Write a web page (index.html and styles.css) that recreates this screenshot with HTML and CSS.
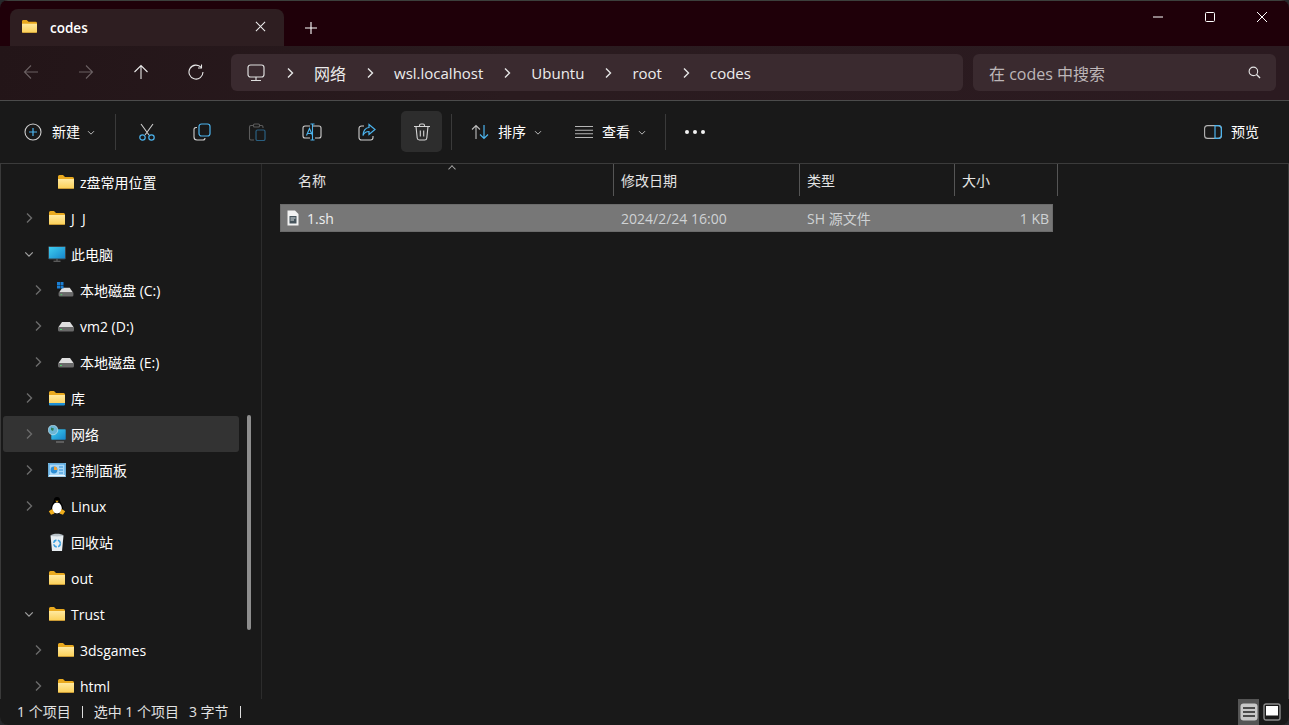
FILE: index.html
```html
<!DOCTYPE html>
<html lang="zh-CN">
<head>
<meta charset="utf-8">
<title>codes</title>
<link rel="stylesheet" href="styles.css">
</head>
<body>
<svg class="defs" width="0" height="0" aria-hidden="true">
  <defs>
    <linearGradient id="gf" x1="0" y1="0" x2="0" y2="1"><stop offset="0" stop-color="#ffe9a0"/><stop offset="1" stop-color="#fbcf55"/></linearGradient>
    <linearGradient id="gm" x1="0" y1="0" x2="1" y2="1"><stop offset="0" stop-color="#3fd0f2"/><stop offset="1" stop-color="#1583c9"/></linearGradient>
    <symbol id="folder" viewBox="0 0 18 16">
      <path d="M1 2.500A1.500 1.500 0 0 1 2.500 1H6l2 2h7.500A1.500 1.500 0 0 1 17 4.500V6H1z" fill="#e9a91e"/>
      <path d="M1 5h16v8.500a1.500 1.500 0 0 1-1.500 1.500h-13A1.500 1.500 0 0 1 1 13.500z" fill="url(#gf)"/>
      <path d="M1 14h16a1.500 1.500 0 0 1-1.500 1h-13A1.500 1.500 0 0 1 1 14z" fill="#c99a35"/>
    </symbol>
    <symbol id="drive" viewBox="0 0 18 14">
      <path d="M5 3h8l3.500 5h-15z" fill="#dedede"/>
      <path d="M1 8h16v3a1.500 1.500 0 0 1-1.500 1.500h-13A1.500 1.500 0 0 1 1 11z" fill="#6a6a6a"/>
      <rect x="3" y="10" width="2" height="1" fill="#4fd06a"/>
    </symbol>
    <symbol id="chev-r" viewBox="0 0 10 12"><path d="M3 1.500 7.500 6 3 10.500" fill="none" stroke="currentColor" stroke-width="1.400"/></symbol>
    <symbol id="chev-d" viewBox="0 0 12 10"><path d="M1.500 3 6 7.500 10.500 3" fill="none" stroke="currentColor" stroke-width="1.500"/></symbol>
  </defs>
</svg>

<div class="app">
  <header class="titlebar">
    <div class="tab">
      <svg class="tab-folder"><use href="#folder"/></svg>
      <span class="tab-name">codes</span>
      <svg class="tab-close" viewBox="0 0 12 12"><path d="M1 1l10 10M11 1 1 11" stroke="#eee" stroke-width="1.100"/></svg>
    </div>
    <svg class="tab-add" viewBox="0 0 12 12"><path d="M6 0v12M0 6h12" stroke="#fff" stroke-width="1.100"/></svg>
    <div class="win-btns">
      <svg class="win-ico" viewBox="0 0 12 12"><path d="M1 6h10" stroke="#fff" stroke-width="1"/></svg>
      <svg class="win-ico" viewBox="0 0 12 12"><rect x="1.500" y="1.500" width="9" height="9" rx="1" fill="none" stroke="#fff" stroke-width="1"/></svg>
      <svg class="win-ico" viewBox="0 0 12 12"><path d="M1 1l10 10M11 1 1 11" stroke="#fff" stroke-width="1"/></svg>
    </div>
  </header>

  <nav class="addressbar">
    <div class="nav-btns">
      <svg class="nav-ico dim" viewBox="0 0 16 16"><path d="M15 8H1.500M8 1.500 1.500 8 8 14.500" fill="none" stroke="currentColor" stroke-width="1.100"/></svg>
      <svg class="nav-ico dim" viewBox="0 0 16 16"><path d="M1 8h13.500M8 1.500 14.500 8 8 14.500" fill="none" stroke="currentColor" stroke-width="1.100"/></svg>
      <svg class="nav-ico" viewBox="0 0 16 16"><path d="M8 15V1.500M1.500 8 8 1.500 14.500 8" fill="none" stroke="currentColor" stroke-width="1.100"/></svg>
      <svg class="nav-ico" viewBox="0 0 16 16"><path d="M13.200 3.400A7 7 0 1 0 15 8" fill="none" stroke="currentColor" stroke-width="1.100"/><path d="M13.500 0.500v3.500H10" fill="none" stroke="currentColor" stroke-width="1.100"/></svg>
    </div>
    <div class="crumbs">
      <svg class="pc-ico" viewBox="0 0 18 18"><rect x="1" y="1" width="16" height="12" rx="2.500" fill="none" stroke="#ddd" stroke-width="1.200"/><path d="M9 13v3M4 16.500h10" stroke="#ddd" stroke-width="1.200"/></svg>
      <svg class="crumb-sep"><use href="#chev-r"/></svg><span class="crumb crumb-cjk">网络</span>
      <svg class="crumb-sep"><use href="#chev-r"/></svg><span class="crumb">wsl.localhost</span>
      <svg class="crumb-sep"><use href="#chev-r"/></svg><span class="crumb">Ubuntu</span>
      <svg class="crumb-sep"><use href="#chev-r"/></svg><span class="crumb">root</span>
      <svg class="crumb-sep"><use href="#chev-r"/></svg><span class="crumb">codes</span>
    </div>
    <div class="search">
      <span class="search-text">在 codes 中搜索</span>
      <svg class="search-ico" viewBox="0 0 14 14"><circle cx="5.800" cy="5.800" r="4.600" fill="none" stroke="#e4e4e4" stroke-width="1.200"/><path d="M9.200 9.200 13 13" stroke="#e4e4e4" stroke-width="1.400"/></svg>
    </div>
  </nav>

  <div class="toolbar">
    <div class="tb-new">
      <svg class="tb-ico18" viewBox="0 0 18 18"><circle cx="9" cy="9" r="8" fill="none" stroke="#cfcfcf" stroke-width="1.100"/><path d="M9 5v8M5 9h8" stroke="#4cb4ee" stroke-width="1.200"/></svg>
      <span class="tb-label tb-label-new">新建</span>
      <svg class="tb-caret tb-caret-new"><use href="#chev-d"/></svg>
    </div>
    <span class="tb-sep tb-sep-a"></span>
    <div class="tb-icons">
      <span class="tb-btn"><svg class="tb-ico" viewBox="0 0 18 18"><path d="M3 1l8 11M15 1 7 12" stroke="#cfcfcf" stroke-width="1.100" fill="none"/><circle cx="4.500" cy="14.500" r="2.700" fill="none" stroke="#4cb4ee" stroke-width="1.200"/><circle cx="13.500" cy="14.500" r="2.700" fill="none" stroke="#4cb4ee" stroke-width="1.200"/></svg></span>
      <span class="tb-btn"><svg class="tb-ico" viewBox="0 0 18 18"><path d="M4 4.500H3A2 2 0 0 0 1 6.500V14a3 3 0 0 0 3 3h6a2 2 0 0 0 2-2" fill="none" stroke="#cfcfcf" stroke-width="1.100"/><rect x="6" y="1" width="11" height="12" rx="2.500" fill="none" stroke="#4cb4ee" stroke-width="1.200"/></svg></span>
      <span class="tb-btn"><svg class="tb-ico" viewBox="0 0 18 18"><path d="M6 2.500H3A1.500 1.500 0 0 0 1.500 4v11.500A1.500 1.500 0 0 0 3 17h3M12 2.500h1.500A1.500 1.500 0 0 1 15 4v1" fill="none" stroke="#5c5c5c" stroke-width="1.100"/><rect x="5.500" y="1" width="6" height="3" rx="1" fill="none" stroke="#5c5c5c" stroke-width="1.100"/><rect x="8" y="7" width="9" height="10.500" rx="1.500" fill="none" stroke="#2a5f80" stroke-width="1.200"/></svg></span>
      <span class="tb-btn"><svg class="tb-ico-w" viewBox="0 0 20 18"><path d="M11 3h6a2 2 0 0 1 2 2v8a2 2 0 0 1-2 2h-4M8 3H3a2 2 0 0 0-2 2v8a2 2 0 0 0 2 2h5" fill="none" stroke="#cfcfcf" stroke-width="1.100"/><path d="M4.500 12.500 7.500 5.500l3 7M5.500 10.500h4M10.500 1v16M8.500 1h4M8.500 17h4" fill="none" stroke="#4cb4ee" stroke-width="1.100"/></svg></span>
      <span class="tb-btn"><svg class="tb-ico" viewBox="0 0 18 18"><path d="M6 3H3.500A2.500 2.500 0 0 0 1 5.500v9A2.500 2.500 0 0 0 3.500 17h9a2.500 2.500 0 0 0 2.500-2.500V13" fill="none" stroke="#cfcfcf" stroke-width="1.100"/><path d="M11 1.500 17 6.500 11 11.500V8.500C8 8.500 6 10 5 12.500 5 8 7.500 4.700 11 4.500z" fill="none" stroke="#4cb4ee" stroke-width="1.200"/></svg></span>
      <span class="tb-btn tb-hot"><svg class="tb-ico" viewBox="0 0 18 18"><path d="M1 3.500h16M6.500 3.500V2.500A1.500 1.500 0 0 1 8 1h2a1.500 1.500 0 0 1 1.500 1.500v1M3 3.500 4.200 15a2.200 2.200 0 0 0 2.200 2h5.200a2.200 2.200 0 0 0 2.200-2L15 3.500M7.300 7.500v6M10.700 7.500v6" fill="none" stroke="#d6d6d6" stroke-width="1.100"/></svg></span>
    </div>
    <span class="tb-sep tb-sep-b"></span>
    <div class="tb-sort">
      <svg class="tb-ico18" viewBox="0 0 18 16"><path d="M5 15V1.500M1 5.500 5 1.500l4 4" fill="none" stroke="#bdbdbd" stroke-width="1.100"/><path d="M13 1v13.500M9 10.500l4 4 4-4" fill="none" stroke="#4cb4ee" stroke-width="1.200"/></svg>
      <span class="tb-label">排序</span>
      <svg class="tb-caret"><use href="#chev-d"/></svg>
    </div>
    <div class="tb-view">
      <svg class="tb-ico18" viewBox="0 0 18 12"><path d="M0 .5h18M0 4.200h18M0 7.800h18M0 11.500h18" stroke="#b5b5b5" stroke-width="1.100"/></svg>
      <span class="tb-label">查看</span>
      <svg class="tb-caret"><use href="#chev-d"/></svg>
    </div>
    <span class="tb-sep tb-sep-c"></span>
    <div class="tb-more"><i></i><i></i><i></i></div>
    <div class="tb-preview">
      <svg class="tb-ico18" viewBox="0 0 18 14"><rect x=".6" y=".6" width="16.800" height="12.800" rx="3" fill="none" stroke="#b5b5b5" stroke-width="1.100"/><path d="M11 .6h3.400a3 3 0 0 1 3 3v6.800a3 3 0 0 1-3 3H11z" fill="none" stroke="#4cb4ee" stroke-width="1.200"/></svg>
      <span class="tb-label">预览</span>
    </div>
  </div>

  <main class="body">
    <aside class="tree">
      <div class="row lvl2"><span class="tw"></span><svg class="ic"><use href="#folder"/></svg><span class="lbl">z盘常用位置</span></div>
      <div class="row"><svg class="tw"><use href="#chev-r"/></svg><svg class="ic"><use href="#folder"/></svg><span class="lbl">J&nbsp;&nbsp;J</span></div>
      <div class="row"><svg class="tw open"><use href="#chev-d"/></svg>
        <svg class="ic" viewBox="0 0 18 16"><rect x=".5" y=".5" width="17" height="12.500" rx="1" fill="url(#gm)" stroke="#3a4248"/><path d="M5.500 15.300h7" stroke="#5a5a5a" stroke-width="1.400"/><path d="M9 13v2" stroke="#5a5a5a" stroke-width="1.400"/></svg><span class="lbl">此电脑</span></div>
      <div class="row lvl2"><svg class="tw"><use href="#chev-r"/></svg>
        <svg class="ic" viewBox="0 0 18 16"><use href="#drive" y="3" width="18" height="13"/><path d="M0 0h3v3H0zM3.500 0h3v3h-3zM0 3.500h3v3H0zM3.500 3.500h3v3h-3z" fill="#1a7fd4"/></svg><span class="lbl">本地磁盘 (C:)</span></div>
      <div class="row lvl2"><svg class="tw"><use href="#chev-r"/></svg><svg class="ic"><use href="#drive"/></svg><span class="lbl">vm2 (D:)</span></div>
      <div class="row lvl2"><svg class="tw"><use href="#chev-r"/></svg><svg class="ic"><use href="#drive"/></svg><span class="lbl">本地磁盘 (E:)</span></div>
      <div class="row"><svg class="tw"><use href="#chev-r"/></svg>
        <svg class="ic" viewBox="0 0 18 16"><use href="#folder" width="18" height="16"/><path d="M1 13h16v1.500a1 1 0 0 1-1 1H2a1 1 0 0 1-1-1z" fill="#1d8fd6"/></svg><span class="lbl">库</span></div>
      <div class="row active"><svg class="tw"><use href="#chev-r"/></svg>
        <svg class="ic ic-tall" viewBox="0 0 18 18"><rect x="3" y="4" width="15" height="11" rx="1" fill="url(#gm)" stroke="#2f3a42" stroke-width=".6"/><path d="M8 17h8" stroke="#888"/><circle cx="5" cy="5" r="4.800" fill="#6bb6d6" stroke="#cfeaf5" stroke-width=".6"/><path d="M3 2.500l3 1-1 2.500-2-1z" fill="#2f7f5a"/></svg><span class="lbl">网络</span></div>
      <div class="row"><svg class="tw"><use href="#chev-r"/></svg>
        <svg class="ic" viewBox="0 0 18 14"><rect x=".3" y=".3" width="17.400" height="13.400" fill="#3f9fe2" stroke="#8fd0f5" stroke-width=".6"/><rect x="1.500" y="1.500" width="15" height="10.500" fill="#a9d8f7"/><circle cx="6" cy="7" r="3.400" fill="#2d8fd6"/><path d="M6 7V3.600A3.400 3.400 0 0 1 9.400 7z" fill="#f2a33a"/><path d="M11 4h4M11 7h4M11 10h4" stroke="#2d8fd6"/><rect x="1" y="12" width="16" height="1.500" fill="#eaf6fd"/></svg><span class="lbl">控制面板</span></div>
      <div class="row"><svg class="tw"><use href="#chev-r"/></svg>
        <svg class="ic ic-tall" viewBox="0 0 18 18"><path d="M9 0c2.300 0 3.200 1.800 3.200 3.500 0 2 2.800 4 2.800 8 0 3-2.500 5.500-6 5.500s-6-2.500-6-5.500c0-4 2.800-6 2.800-8C5.800 1.800 6.700 0 9 0z" fill="#000"/><path d="M9 5.500c2.800 0 4.800 3 4.800 6.300 0 2.800-2 4.700-4.800 4.700s-4.800-1.900-4.800-4.700C4.200 8.500 6.200 5.500 9 5.500z" fill="#fff"/><path d="M7.300 3.700h3.400L9 5.600z" fill="#f3b21a"/><path d="M.8 14.300 4.300 12l2.200 4.600-3.500 1.200zM17.200 14.300 13.700 12l-2.200 4.600 3.500 1.200z" fill="#f0ae1c"/></svg><span class="lbl">Linux</span></div>
      <div class="row"><span class="tw"></span>
        <svg class="ic ic-tall" viewBox="0 0 18 18"><path d="M2.500 2.500h13L14 18H4z" fill="#e8eef2"/><path d="M2.500 2.500c2-2.500 11-2.500 13 0-3 1.200-10 1.200-13 0z" fill="#b8c2c8"/><circle cx="9" cy="10.500" r="3.400" fill="none" stroke="#3aa0e0" stroke-width="1.600" stroke-dasharray="4 1.500"/></svg><span class="lbl">回收站</span></div>
      <div class="row"><span class="tw"></span><svg class="ic"><use href="#folder"/></svg><span class="lbl">out</span></div>
      <div class="row"><svg class="tw open"><use href="#chev-d"/></svg><svg class="ic"><use href="#folder"/></svg><span class="lbl">Trust</span></div>
      <div class="row lvl2"><svg class="tw"><use href="#chev-r"/></svg><svg class="ic"><use href="#folder"/></svg><span class="lbl">3dsgames</span></div>
      <div class="row lvl2"><svg class="tw"><use href="#chev-r"/></svg><svg class="ic"><use href="#folder"/></svg><span class="lbl">html</span></div>
      <div class="scroll-thumb"></div>
    </aside>

    <section class="files">
      <div class="heads">
        <span class="caret-up"></span>
        <div class="head h-name">名称</div>
        <div class="head">修改日期</div>
        <div class="head">类型</div>
        <div class="head">大小</div>
      </div>
      <div class="file">
        <div class="cell cell-name">
          <svg class="file-ico" viewBox="0 0 12 16"><path d="M.5.500h7.500l3.500 3.500v11.500H.5z" fill="#f2f2f2"/><rect x="2.500" y="6" width="7" height="7.500" fill="#46545c"/><path d="M3.500 8h5M3.500 10h3.500" stroke="#d8dde0"/></svg>
          <span class="file-name">1.sh</span>
        </div>
        <div class="cell">2024/2/24 16:00</div>
        <div class="cell">SH 源文件</div>
        <div class="cell cell-size">1 KB</div>
      </div>
    </section>
  </main>

  <footer class="status">
    <span>1 个项目</span><span class="st-bar"></span><span>选中 1 个项目</span><span class="st-gap">3 字节</span><span class="st-bar"></span>
    <div class="views">
      <span class="view on"><svg class="view-ico" viewBox="0 0 18 18"><rect x=".5" y=".5" width="17" height="17" rx="3" fill="#c8c8c8"/><path d="M3 5h12M3 9h12M3 13h12" stroke="#222" stroke-width="1.500"/></svg></span>
      <span class="view"><svg class="view-ico" viewBox="0 0 18 18"><rect x="1" y="1" width="16" height="16" rx="2" fill="none" stroke="#8a8a8a" stroke-width="1.400"/><rect x="3" y="3" width="12" height="9.500" fill="#fff"/></svg></span>
    </div>
  </footer>
</div>
</body>
</html>
```
FILE: styles.css
```css
* { box-sizing: border-box; }
html, body { margin: 0; height: 100%; background: #26282b; overflow: hidden; }
.defs { position: absolute; }
body { font-family: "Open Sans", "Noto Sans CJK SC", sans-serif; color: #fff; font-size: 14px; }
svg { display: block; flex: none; }

.app {
  width: 1289px; height: 725px; display: flex; flex-direction: column;
  background: #191919; border-radius: 8px; overflow: hidden;
  box-shadow: inset 0 0 0 1px #3a3a3a;
}

/* title bar */
.titlebar { height: 46px; flex: none; background: #1f0009; display: flex; align-items: flex-end; padding-left: 10px; border-top: 1px solid #3c3f3c; }
.tab {
  width: 274px; height: 37px; background: #2e1e21; border-radius: 8px 8px 0 0;
  display: flex; align-items: center; padding: 0 0 0 11px;
}
.tab-folder { width: 17px; height: 15px; margin-top: -2px; }
.tab-name { margin-left: 12px; font-weight: 600; font-size: 13.500px; flex: 1; padding-top: 1px; }
.tab-close { width: 11px; height: 11px; margin-right: 18px; margin-top: -3px; }
.tab-add { width: 12px; height: 12px; margin: 0 0 12px 21px; }
.win-btns { margin-left: auto; align-self: flex-start; display: flex; padding-top: 10px; padding-right: 21px; gap: 40px; }
.win-ico { width: 12px; height: 12px; }

/* address bar */
.addressbar {
  height: 55px; flex: none; display: flex; align-items: flex-start; padding: 8px 13px 0 0;
  background: linear-gradient(100deg, #231518, #2a1b1f 40%, #2b1a20);
  border-bottom: 1px solid #4b4b4b;
}
.nav-btns { width: 231px; flex: none; display: flex; gap: 39px; padding: 10px 0 0 23px; color: #e8e8e8; }
.nav-ico { width: 16px; height: 16px; }
.nav-ico.dim { color: #6a6062; }
.crumbs {
  flex: none; width: 732px; height: 37px; background: #3a2a2f; border-radius: 6px;
  display: flex; align-items: center; padding-left: 16px; font-size: 15px; color: #ececec;
}
.pc-ico { width: 18px; height: 18px; margin-right: 20px; }
.crumb-sep { width: 10px; height: 12px; color: #e6e6e6; margin-right: 19px; margin-left: 0; }
.crumb { margin-right: 19px; }
.crumb-cjk { font-size: 16px; }
.search {
  flex: none; width: 303px; height: 37px; margin-left: 10px; background: #3a2a2f; border-radius: 6px;
  display: flex; align-items: center; justify-content: space-between; padding: 0 15px 0 16px;
  font-size: 16px; color: #bdb6b8;
}
.search-ico { width: 13px; height: 13px; }

/* toolbar */
.toolbar {
  height: 63px; flex: none; display: flex; align-items: center; padding-left: 24px;
  border-bottom: 1px solid #3b3b3b; background: #191919;
}
.tb-new, .tb-sort, .tb-view, .tb-preview { display: flex; align-items: center; }
.tb-label { font-size: 14px; margin-left: 9px; line-height: 20px; }
.tb-label-new { margin-left: 10px; }
.tb-ico18 { width: 18px; height: 18px; }
.tb-caret { width: 8px; height: 7px; color: #b8b8b8; margin-left: 8px; }
.tb-caret-new { margin-left: 7px; }
.tb-sep { width: 1px; height: 36px; background: #3a3a3a; margin-left: 19px; }
.tb-sep-a { margin-left: 20px; }
.tb-icons { display: flex; align-items: center; gap: 14px; margin-left: 10px; }
.tb-btn { width: 41px; height: 41px; display: flex; align-items: center; justify-content: center; border-radius: 5px; }
.tb-hot { background: #2d2d2d; margin-top: -1px; }
.tb-ico { width: 18px; height: 18px; }
.tb-ico-w { width: 20px; height: 18px; }
.tb-sep-b { margin-left: 9px; }
.tb-sort { margin-left: 19px; }
.tb-view { margin-left: 33px; }
.tb-sep-c { margin-left: 19px; }
.tb-more { display: flex; gap: 4px; margin-left: 19px; }
.tb-more i { width: 4px; height: 4px; border-radius: 50%; background: #f2f2f2; }
.tb-preview { margin-left: auto; margin-right: 30px; }

/* body */
.body { flex: 1; min-height: 0; display: flex; }
.tree { width: 262px; flex: none; border-right: 1px solid #2c2c2c; padding: 0 0 0 3px; position: relative; overflow: hidden; }
.row { width: 236px; height: 36px; display: flex; align-items: center; padding-left: 21px; flex: none; line-height: 20px; }
.row.lvl2 { padding-left: 30px; }
.row.active { background: #333; border-radius: 3px; }
.lbl { padding-top: 2px; }
.tw { width: 10px; height: 12px; color: #6b6b6b; flex: none; }
.tw.open { color: #a0a0a0; }
.ic { width: 18px; height: 16px; margin-left: 14px; margin-right: 5px; flex: none; }
.ic-tall { height: 18px; }
.scroll-thumb { position: absolute; left: 247px; top: 251px; width: 4px; height: 215px; background: #8e8e8e; border-radius: 2px; }

.files { flex: 1; min-width: 0; padding-left: 18px; }
.heads {
  position: relative; display: grid; grid-template-columns: 334px 186px 155px 103px;
  height: 32px; width: 778px;
}
.head { padding-left: 7px; border-right: 1px solid #555; display: flex; align-items: center; font-size: 14px; color: #e4e4e4; height: 32px; }
.h-name { padding-left: 18px; }
.caret-up {
  position: absolute; left: 169px; top: 2px; width: 6px; height: 6px;
  border-left: 1px solid #aaa; border-top: 1px solid #aaa; transform: rotate(45deg) scale(.9);
}
.file {
  margin-top: 8px; width: 773px; height: 28px; background: #777;
  border: 1px solid #6b6b6b; display: grid; grid-template-columns: 333px 186px 155px 1fr;
  align-items: center; font-size: 14px; color: #cfd2d4;
}
.cell { padding-left: 7px; }
.cell-name { display: flex; align-items: center; padding-left: 6px; color: #eee; }
.file-ico { width: 12px; height: 16px; }
.file-name { margin-left: 8px; }
.cell-size { text-align: right; padding-right: 3px; }

/* status */
.status {
  height: 26px; flex: none; background: #191919; display: flex; align-items: center;
  padding-left: 17px; font-size: 14px; color: #e2e2e2; line-height: 20px;
}
.st-bar { width: 1px; height: 12px; background: #ddd; margin: 0 11px; }
.st-gap { margin-left: 10px; }
.views { margin-left: auto; margin-right: 7px; display: flex; align-items: center; gap: 2px; height: 26px; }
.view { width: 21px; height: 26px; display: flex; align-items: center; justify-content: center; }
.view.on { background: #555; }
.view-ico { width: 18px; height: 18px; }
```
